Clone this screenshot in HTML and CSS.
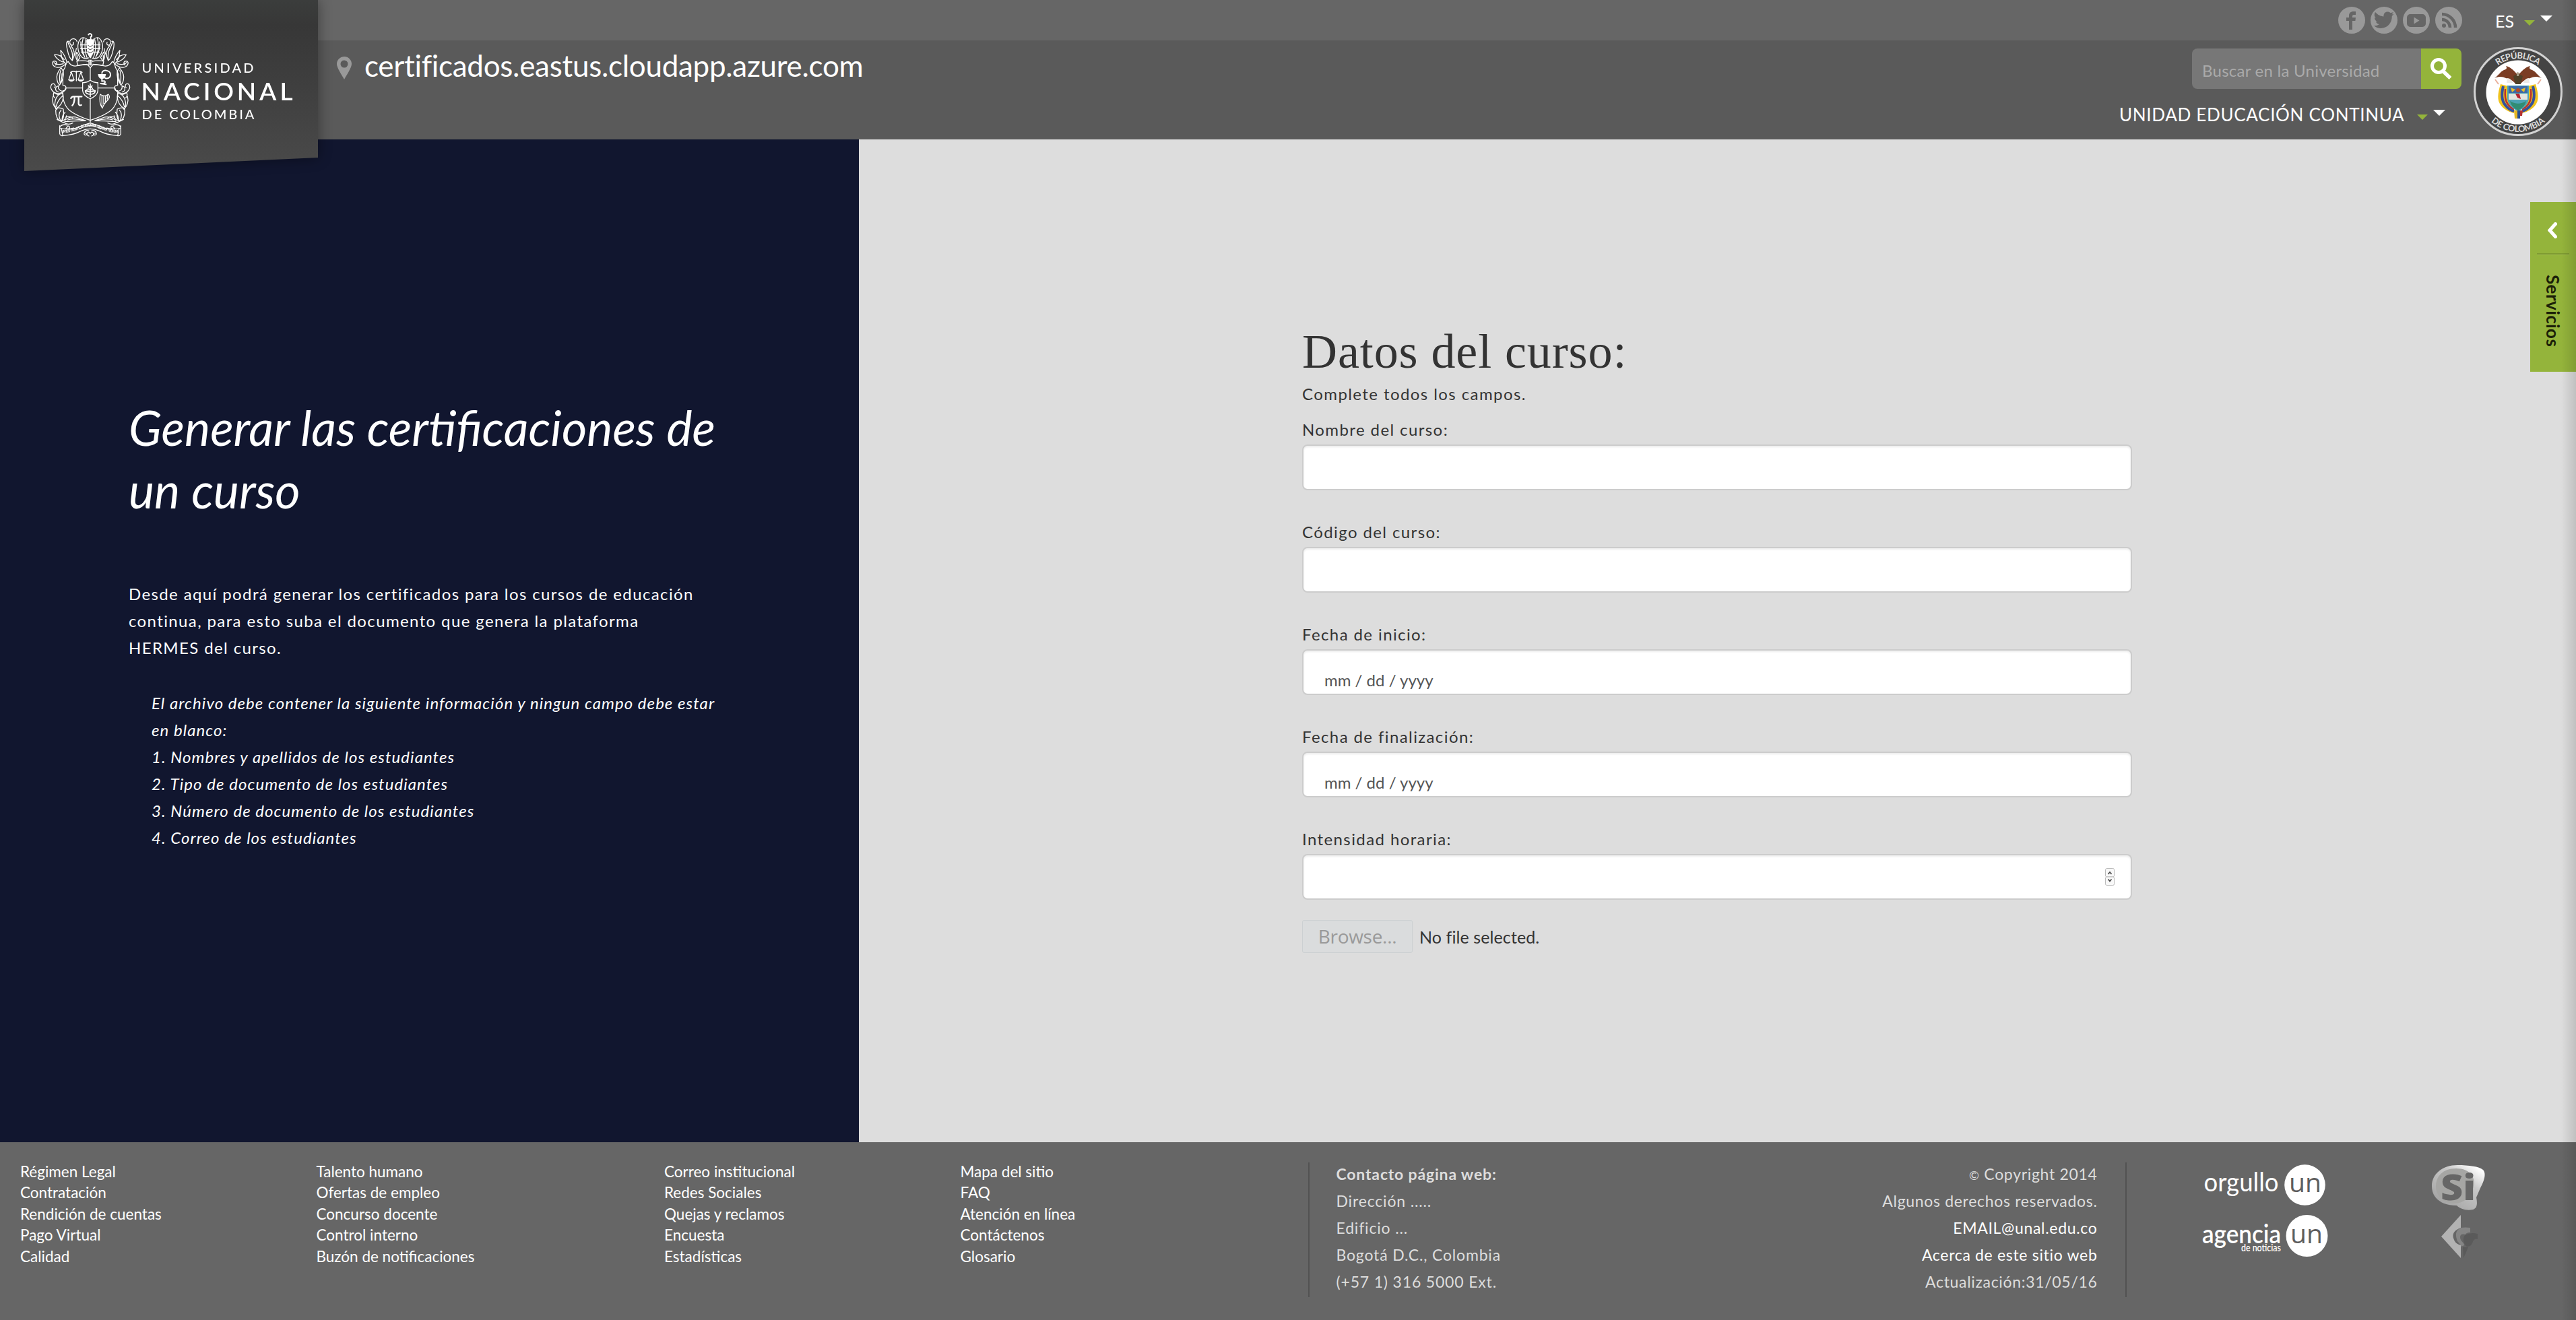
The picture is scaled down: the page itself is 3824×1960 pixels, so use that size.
FILE: index.html
```html
<!DOCTYPE html>
<html lang="es">
<head>
<meta charset="utf-8">
<title>Generar certificaciones</title>
<link rel="stylesheet" href="styles.css">
</head>
<body>
<header class="header">
  <div class="topbar">
    <nav class="social">
      <svg class="social-icon" viewBox="0 0 40 40"><circle cx="20" cy="20" r="20" fill="#999"/><path d="M16 34V21h-4v-5h4v-3c0-4 3-6 7-6h3v5h-2c-2 0-3 .6-3 2v2h5l-.6 5H21v13z" fill="#666"/></svg>
      <svg class="social-icon" viewBox="0 0 40 40"><circle cx="20" cy="20" r="20" fill="#999"/><path d="M5 28c4 .4 6-.5 8-2-3-.5-4.500-2-5-4h2c-3-1.200-4-3.500-4-6l2 .6C5 14 5.500 11 7 8c4 4.500 8 6 12.500 6.400C19 10 22 7.500 25 7.500c2 0 3.500.6 4.800 1.800L34 8l-2.500 3.500 3-.7-2.700 3C32 24 25 32 15 32c-4 0-7-1.500-10-4z" fill="#666"/></svg>
      <svg class="social-icon" viewBox="0 0 40 40"><circle cx="20" cy="20" r="20" fill="#999"/><rect x="6" y="11" width="28" height="19" rx="5" fill="#666"/><path d="M16.500 15.500v10l8-5z" fill="#999"/></svg>
      <svg class="social-icon" viewBox="0 0 40 40"><circle cx="20" cy="20" r="20" fill="#999"/><circle cx="13" cy="28" r="3" fill="#666"/><path d="M10 19a12 12 0 0 1 12 12M10 11a20 20 0 0 1 20 20" fill="none" stroke="#666" stroke-width="4.500"/></svg>
    </nav>
    <div class="lang"><span>ES</span><i class="caret caret-green"></i><i class="caret caret-white"></i></div>
  </div>
  <div class="mainbar">
    <svg class="pin" viewBox="0 0 22 34"><path fill-rule="evenodd" d="M11 0a11 11 0 0 1 11 11c0 6-8 17-11 23C8 28 0 17 0 11A11 11 0 0 1 11 0zm0 5.500a5.500 5.500 0 1 0 0 11 5.500 5.500 0 0 0 0-11z" fill="#999"/></svg>
    <a class="site-name">certificados.eastus.cloudapp.azure.com</a>
    <div class="tools">
      <div class="search">
        <input class="search-input" type="text" placeholder="Buscar en la Universidad">
        <button class="search-btn"><svg viewBox="0 0 32 32" class="search-icon"><circle cx="12" cy="12" r="9.500" fill="none" stroke="#fff" stroke-width="5"/><path d="M19 20l10.500 10" stroke="#fff" stroke-width="5.500"/></svg></button>
      </div>
      <div class="unit"><span>UNIDAD EDUCACIÓN CONTINUA</span><i class="caret caret-green"></i><i class="caret caret-white"></i></div>
    </div>
    <svg class="crest" viewBox="0 0 132 132">
      <defs>
        <path id="arcTop" d="M17 66a49 49 0 0 1 98 0"/>
        <path id="arcBottom" d="M6 66a60 60 0 0 0 120 0"/>
      </defs>
      <circle cx="66" cy="66" r="64.500" fill="#444" stroke="#d2d2d2" stroke-width="3"/>
      <circle cx="66" cy="67" r="47.500" fill="#fff"/>
      <text class="crest-text"><textPath href="#arcTop" startOffset="50%" text-anchor="middle" textLength="64">REPÚBLICA</textPath></text>
      <text class="crest-text"><textPath href="#arcBottom" startOffset="50%" text-anchor="middle" textLength="88">DE COLOMBIA</textPath></text>
      <path d="M40 55c-4 13-6 24 1 32 6 7 14 10 19 11V60zM92 55c4 13 6 24-1 32-6 7-14 10-19 11V60z" fill="#f0c31c"/>
      <path d="M44 58c-3 12-2 22 3 28 4 5 9 8 13 9M88 58c3 12 2 22-3 28-4 5-9 8-13 9" fill="none" stroke="#35519b" stroke-width="4"/>
      <path d="M47 62c-1 10 0 18 4 23 3 4 6 6 9 7M85 62c1 10 0 18-4 23-3 4-6 6-9 7" fill="none" stroke="#b83332" stroke-width="2.500"/>
      <path d="M50 57h32v18c0 10-8 16-16 21-8-5-16-11-16-21z" fill="#4da3b5"/>
      <path d="M52 58h28v10H52z" fill="#3b6aa8"/><path d="M52 69h28v9H52z" fill="#e2e5df"/>
      <path d="M55 60l7 3-5 4zM77 60l-7 3 5 4z" fill="#e8be2c"/><circle cx="66" cy="64" r="3" fill="#b64b26"/>
      <path d="M62 69h6l2 8-5-2z" fill="#b52330"/><path d="M54 80c8 5 16 5 24 0-2 8-7 11-12 14-5-3-10-6-12-14z" fill="#318c73"/>
      <path d="M66 42c-8-10-13-13-18-14 2 3 1 5-3 6-5 2-7 7-14 12 8-3 12-2 17 0 5 1 9 3 13 7h10c4-4 8-6 13-7 5-2 9-3 17 0-7-5-9-10-14-12-4-1-5-3-3-6-5 1-10 4-18 14z" fill="#7b3d24"/>
      <path d="M59 43l7-4 7 4-3 12h-8z" fill="#4f4128"/><path d="M64 37l4 1-1 5h-3z" fill="#a89e88"/>
      <path d="M50 46c4 0 7 3 8 7h-9zM82 46c-4 0-7 3-8 7h9z" fill="#eceae6"/>
      <path d="M32 48l5 7M100 48l-5 7" stroke="#eab09a" stroke-width="2"/>
      <path d="M60 94h5v12h-4z" fill="#e5b721"/><path d="M65 94h4v12h-4z" fill="#294e92"/><path d="M69 94h4l-1 8h-3z" fill="#b43232"/>
    </svg>
  </div>
  <svg class="brand" viewBox="0 0 436 254">
    <defs>
      <linearGradient id="brandFill" x1="0" y1="0" x2="0" y2="1"><stop offset="0" stop-color="#3b3d3c"/><stop offset=".15" stop-color="#373737"/><stop offset="1" stop-color="#4a4a4a"/></linearGradient>
      <path id="motto" d="M74 471q42 2 80-16 50-24 100 0 38 18 80 16"/>
      <g id="coatHalf">
        <path d="M204 182l-14-16-50 8q-22 2-34-20l-10 8q-3 20-10 28-6 9-4 26v44q14 0 14 12t-14 12q-4 58 30 88 30 24 92 44"/>
        <path d="M196 62c-8-12-26-20-34-10-20 20-16 60 4 82 8 6 22 10 30 4"/>
        <path d="M172 50q-12 45 8 86M184 56q-10 40 6 82M162 66q-2 40 14 62M160 80h38M160 96h38M164 112h34"/>
        <path d="M145 66c-2-20-36-16-32 6 6 16 22 8 16-4M108 64c-16-4-8 30-6 38 4 20 10 40 22 48 8-26 16-34 18-54M104 66c8 30 26 40 20 80M118 84c18 20 18 40 8 60M144 112q-10 24 4 40l10-16zM146 128v22"/>
        <path d="M144 152q30-4 54 2v16q-26-6-50 2zM196 148h8v22"/>
        <path d="M96 166q-20-14-24-62 20 22 28 54M90 158q-32-6-46-34 24-4 44 22M84 164q-30 8-42-6M96 164q-24 20-42 16c-18-4-26-26-10-28 14 0 12 16 4 18M72 128l16 30"/>
        <path d="M74 182q-24 28-18 54 4 18 12 22 20-28 16-60zM72 194q-8 28-2 58M78 208q0 26-8 44"/>
        <path d="M94 272q-2 20-30 24c-24 4-44-24-32-40 12-10 22 8 12 14M62 262q-2 20 16 24M66 262c-22 2-20 24-4 28"/>
        <path d="M82 296q-34 4-36 50l4 18q30-14 34-52zM46 316q-10-8-4-24 10 8 20 10M52 356q6-30 30-50M38 310c-6 22 2 46 18 56"/>
        <path d="M84 366q-28-14-34 6c0 24 6 40 22 48q18-8 12-52zM72 418c-10-20-10-34 2-48M92 380q-14 12-14 38 16-2 20-22M56 412l28 14"/>
        <path d="M90 416q24-20 50-14 26 8 44 16-40 0-94 4M104 414q30-10 76 4M84 424q20 16 42 4M96 402q20-6 30 4"/>
        <path d="M204 428q-36 10-66 24-32 8-42 0 12-18 16-6 0 10-10 8M68 444q16-14 34-6M68 440v36q4 12 16 8 50-4 78-20 22-10 42-10M68 450q28 10 62 0M82 484l-6-28M204 440q-20 0-48 14"/>
        <path d="M204 474c-10-16-24 8-6 12M198 462c-18-6-30 20-14 20 8-2 4-12-2-8"/>
      </g>
    </defs>
    <path d="M0 0H436V234L0 254z" fill="url(#brandFill)"/>
    <g transform="translate(30 40) scale(.3333)" fill="none" stroke="#fff" stroke-width="3.800" stroke-linecap="round" stroke-linejoin="round">
      <use href="#coatHalf"/>
      <use href="#coatHalf" transform="translate(408 0) scale(-1 1)"/>
      <path d="M204 184v240M96 272h216"/>
      <path d="M196 34q6-8 14 0 2 10-4 10v8" stroke-width="6"/>
      <path d="M188 60q16-8 32 0l-4 56-12 22-12-22z" fill="#fff"/>
      <path d="M194 82l10 6 10-6M194 96l10 6 10-6M194 110l10 6 10-6" stroke="#444" stroke-width="3"/>
      <path d="M170 248q16 2 34-10 18 12 34 10v36q-2 22-34 36-32-14-34-36z" fill="#404040"/>
      <path d="M204 254v56M204 266l-10 8M204 266l10 8M204 280l-16 0M204 280l16 0M204 290l-22-6M204 290l22-6M204 300q-18 0-22-12M204 300q18 0 22-12M196 262l8 12 8-12" stroke-width="5"/>
      <path d="M116 202q14-8 26 0 12-8 26 0M142 196v44M120 202l-12 34M120 202l12 34M162 202l-12 34M162 202l12 34"/>
      <path d="M108 236h24q-12 12-24 0zM150 236h24q-12 12-24 0z" fill="#fff"/>
      <path d="M240 212h32q-4 18-16 18t-16-18z" fill="#fff"/><path d="M256 228v14q14-4 14 4t-20 6l24 4M256 206c0-18 38-16 38 6 0 18-18 20-26 14" stroke-width="6"/>
      <path d="M118 318q2-8 12-8h36M134 312q0 28-10 38M152 312v30q2 10 12 6" stroke-width="7"/>
      <path d="M248 300q-6 40 10 62 6-20 26-38 10-14 0-24-18 14-36 0zM256 306v46M264 308v34M272 308v24M280 304v18"/>
      <text class="motto-text"><textPath href="#motto" startOffset="50%" text-anchor="middle" textLength="256">INTER · AULAS · ACADEMIÆ · QUÆRE · VERUM</textPath></text>
    </g>
    <g class="brand-text" fill="#fff">
      <text x="174.500" y="107.700" font-size="20" textLength="166">UNIVERSIDAD</text>
      <text x="173.500" y="148.500" font-size="37" class="brand-strong" textLength="225">NACIONAL</text>
      <text x="174.500" y="177" font-size="20" textLength="167">DE COLOMBIA</text>
    </g>
  </svg>
</header>

<main class="main">
  <section class="intro">
    <h1 class="intro-title">Generar las certificaciones de<br>un curso</h1>
    <p class="intro-text">Desde aquí podrá generar los certificados para los cursos de educación<br>continua, para esto suba el documento que genera la plataforma<br>HERMES del curso.</p>
    <div class="intro-list">El archivo debe contener la siguiente información y ningun campo debe estar<br>en blanco:<br>1. Nombres y apellidos de los estudiantes<br>2. Tipo de documento de los estudiantes<br>3. Número de documento de los estudiantes<br>4. Correo de los estudiantes</div>
  </section>
  <form class="form">
    <h2 class="form-title">Datos del curso:</h2>
    <p class="form-hint">Complete todos los campos.</p>
    <label class="field"><span>Nombre del curso:</span><input class="input" type="text"></label>
    <label class="field"><span>Código del curso:</span><input class="input" type="text"></label>
    <label class="field"><span>Fecha de inicio:</span><input class="input input-date" type="text" placeholder="mm / dd / yyyy"></label>
    <label class="field"><span>Fecha de finalización:</span><input class="input input-date" type="text" placeholder="mm / dd / yyyy"></label>
    <div class="field"><span>Intensidad horaria:</span>
      <div class="input input-number">
        <svg class="spinner" viewBox="0 0 14 26"><rect x=".5" y=".5" width="13" height="12.500" rx="2" fill="#f8f8f8" stroke="#bbb"/><rect x=".5" y="13" width="13" height="12.500" rx="2" fill="#f8f8f8" stroke="#bbb"/><path d="M4.500 9L7 6l2.500 3M4.500 16.500L7 19.500l2.500-3" fill="none" stroke="#444" stroke-width="1.600"/></svg>
      </div>
    </div>
    <div class="file"><button class="browse" type="button">Browse...</button><span>No file selected.</span></div>
  </form>
</main>

<footer class="footer">
  <ul class="links"><li>Régimen Legal</li><li>Contratación</li><li>Rendición de cuentas</li><li>Pago Virtual</li><li>Calidad</li></ul>
  <ul class="links"><li>Talento humano</li><li>Ofertas de empleo</li><li>Concurso docente</li><li>Control interno</li><li>Buzón de notificaciones</li></ul>
  <ul class="links"><li>Correo institucional</li><li>Redes Sociales</li><li>Quejas y reclamos</li><li>Encuesta</li><li>Estadísticas</li></ul>
  <ul class="links"><li>Mapa del sitio</li><li>FAQ</li><li>Atención en línea</li><li>Contáctenos</li><li>Glosario</li></ul>
  <div class="contact">
    <p class="contact-left"><b>Contacto página web:</b><br>Dirección .....<br>Edificio ...<br>Bogotá D.C., Colombia<br>(+57 1) 316 5000 Ext.</p>
    <p class="contact-right"><span class="copy">©</span> Copyright 2014<br>Algunos derechos reservados.<br><a>EMAIL@unal.edu.co</a><br><a>Acerca de este sitio web</a><br>Actualización:31/05/16</p>
  </div>
  <div class="partners">
    <svg class="partner-un" viewBox="0 0 190 140">
      <circle cx="152.500" cy="33.500" r="30.300" fill="#fff"/><circle cx="155.500" cy="109" r="31" fill="#fff"/>
      <g class="partner-text" fill="#fff">
        <text x="2.500" y="43" font-size="39" textLength="111" lengthAdjust="spacingAndGlyphs">orgullo</text>
        <text x="0" y="120" font-size="39" font-weight="600" textLength="117" lengthAdjust="spacingAndGlyphs">agencia</text>
        <text x="58" y="131.700" font-size="14.500" font-weight="600" textLength="59" lengthAdjust="spacingAndGlyphs">de noticias</text>
      </g>
      <g class="partner-un-text" fill="#5e5e5e"><text x="129" y="44" font-size="39" textLength="48" lengthAdjust="spacingAndGlyphs">un</text><text x="131" y="120" font-size="39" textLength="48" lengthAdjust="spacingAndGlyphs">un</text></g>
    </svg>
    <svg class="partner-si" viewBox="0 0 80 140">
      <defs><linearGradient id="siFill" x1="0" y1="1" x2=".8" y2="0"><stop offset="0" stop-color="#999"/><stop offset=".7" stop-color="#c8c8c8"/><stop offset="1" stop-color="#fff"/></linearGradient></defs>
      <path d="M38 0c17 0 32 2 38 7 5 5 2 16-4 27l-6 14c2 10 1 16-5 18-10 2-19-1-24-6C14 60 0 49 0 31S16 0 38 0z" fill="url(#siFill)"/>
      <path d="M36 5C16 5 6 17 6 32c0 13 11 25 27 25 9 0 18-4 23-12 6-9 9-20 4-29C55 8 46 5 36 5z" fill="#a6a6a4"/>
      <text class="si-text" x="13" y="52" font-size="53" textLength="52" lengthAdjust="spacingAndGlyphs">Si</text>
      <path d="M43 74v19c-10 4-14 9-10 18 2 5 6 7 10 8v19L14 106z" fill="#b3b3b3"/>
      <path d="M43 93q7-1 14 0v7q-6 0-7 3-8-2-8 4c0 6 6 8 6 12l-4 2q-3-5-6-8-6-15 5-20z" fill="#858585"/>
      <path d="M49 104q9-5 19-2v8q-4-2-7 3c-1 4-3 8-9 8-5-3-7-12-3-17zM46 122h8l-7 16z" fill="#5a5a5a"/>
    </svg>
  </div>
</footer>

<aside class="services">
  <svg class="services-arrow" viewBox="0 0 14 24"><path d="M11.500 2.500L3 12l8.500 9.500" fill="none" stroke="#fff" stroke-width="5" stroke-linecap="round"/></svg>
  <hr class="services-line">
  <span class="services-label">Servicios</span>
</aside>
<div class="edge-shadow"></div>
</body>
</html>
```
FILE: styles.css
```css
* { box-sizing: border-box; }
html, body { margin: 0; }
body {
  position: relative;
  width: 3824px;
  height: 1960px;
  overflow: hidden;
  display: flex;
  flex-direction: column;
  font-family: Lato, "Open Sans", sans-serif;
  font-size: 24px;
  color: #333;
  background: #ddd;
}
p, h1, h2, ul { margin: 0; padding: 0; font-weight: 400; }
ul { list-style: none; }
input, button { font: inherit; border: 0; padding: 0; }

/* header */
.header { position: relative; z-index: 2; flex: none; color: #fff; }
.topbar {
  display: flex;
  justify-content: flex-end;
  height: 60px;
  background: #666;
}
.social { display: flex; gap: 8px; padding-top: 10px; }
.social-icon { width: 40px; height: 40px; }
.lang {
  display: flex;
  width: 169px;
  padding-left: 49px;
  font-size: 25px;
  line-height: 62px;
}
.lang span { width: 43px; }
.caret { width: 0; height: 0; border-style: solid; border-color: transparent; flex: none; }
.caret-green { border-width: 8px 8px 0; border-top-color: #94b43b; margin-top: 30px; }
.caret-white { border-width: 9px 9px 0; border-top-color: #fff; margin: 23px 0 0 8px; }
.mainbar {
  display: flex;
  align-items: flex-start;
  height: 147px;
  padding: 10px 20px 0 500px;
  background: #5a5a5a;
}
.pin { width: 22px; height: 34px; margin: 14px 19px 0 0; }
.site-name { font-size: 44px; line-height: 60px; letter-spacing: -.300px; margin-top: -3px; }
.tools { display: flex; flex-direction: column; align-items: flex-end; margin-left: auto; width: 520px; }
.search { display: flex; width: 400px; height: 60px; margin-top: 2px; border-radius: 8px; overflow: hidden; }
.search-input { flex: 1; min-width: 0; padding: 4px 0 0 15px; background: #777; letter-spacing: .250px; }
.search-input::placeholder { color: #aaa; }
.search-btn { display: flex; width: 60px; background: #94b43b; }
.search-icon { width: 32px; height: 32px; margin: 14px 0 0 14px; }
.unit { display: flex; margin-top: 14px; margin-right: 24px; font-size: 26px; line-height: 49px; letter-spacing: .680px; }
.unit span { width: 442px; }
.unit .caret-green { margin-top: 24px; }
.unit .caret-white { margin-top: 17px; }
.crest { width: 132px; height: 132px; margin-left: 18px; }
.crest-text { font-size: 13px; font-weight: 700; fill: #ddd; }
.brand {
  position: absolute;
  left: 36px;
  top: 0;
  width: 436px;
  height: 254px;
  filter: drop-shadow(0 0 10px rgba(0, 0, 0, .4));
}
.brand-text { font-weight: 500; }
.brand-strong { font-weight: 600; }
.motto-text { font-family: "Open Sans", sans-serif; font-size: 17px; font-weight: 700; font-stretch: 75%; fill: #fff; stroke: none; }

/* content */
.main { display: flex; flex: none; height: 1489px; }
.intro { width: 1275px; padding: 381px 0 0 191px; background: #11162f; color: #fff; white-space: nowrap; }
.intro-title { font-size: 72px; line-height: 93px; font-style: italic; }
.intro-text { margin-top: 88px; line-height: 40px; letter-spacing: 1.380px; }
.intro-list { margin: 42px 0 0 34px; line-height: 40px; letter-spacing: 1.050px; font-style: italic; }
.form { flex: 1; padding: 275px 0 0 658px; background: #ddd; }
.form-title { font: 72px/80px "Liberation Serif", serif; letter-spacing: .9px; }
.form-hint { margin: 7px 0 21px; line-height: 32px; letter-spacing: 1.420px; }
.field { display: flex; flex-direction: column; gap: 6px; width: 1232px; margin-bottom: 46px; line-height: 32px; letter-spacing: 1.400px; }
.input {
  height: 68px;
  width: 100%;
  border: 2px solid #ccc;
  border-radius: 8px;
  background: #fff;
  box-shadow: inset 0 2px 3px rgba(0, 0, 0, .08);
}
.input-date { padding: 22px 0 0 31px; font-size: 24px; letter-spacing: 0; }
.input-date::placeholder { color: #555; }
.input-number { display: flex; justify-content: flex-end; align-items: center; padding-right: 24px; }
.spinner { width: 14px; height: 26px; }
.file { display: flex; align-items: center; gap: 10px; margin-top: -16px; }
.file span { font-size: 25px; letter-spacing: .1px; }
.browse { width: 164px; height: 49px; border: 1px solid #ccd0d2; border-radius: 3px; background: #dadcdd; color: #999; font-family: "Open Sans", sans-serif; font-size: 28px; line-height: 45px; letter-spacing: -.300px; }

/* footer */
.footer {
  display: grid;
  grid-template-columns: 439.500px 516.500px 439.500px 516px 1215px 1fr;
  height: 264px;
  padding-left: 30px;
  background: #666;
  color: #fff;
}
.links { padding-top: 28px; font-size: 22.500px; line-height: 31.400px; }
.contact {
  display: flex;
  justify-content: space-between;
  height: 200px;
  margin-top: 30px;
  padding: 0 41px 0 40px;
  border: solid #525252;
  border-width: 0 2px;
  color: #ddd;
  font-size: 23px;
  line-height: 40px;
}
.contact p { margin-top: -3px; }
.contact a { color: #fff; }
.contact-left { letter-spacing: .830px; }
.contact-right { text-align: right; letter-spacing: .680px; }
.copy { font-size: 18px; line-height: 1; }
.partners { display: flex; padding-top: 30px; }
.partner-un { width: 190px; height: 140px; margin-left: 112px; }
.partner-si { width: 80px; height: 140px; margin: 4px 0 0 151px; overflow: visible; }
.partner-un-text { font-family: "Open Sans", sans-serif; font-weight: 500; }
.si-text { font-family: "Open Sans", sans-serif; font-weight: 800; fill: #666; }

/* services tab and the hidden panel's shadow */
.services {
  position: absolute;
  z-index: 3;
  right: 0;
  top: 300px;
  display: flex;
  flex-direction: column;
  align-items: center;
  width: 68px;
  height: 252px;
  padding-top: 30px;
  background: #94b43b;
}
.services-arrow { width: 14px; height: 24px; margin-right: 2px; }
.services-line { width: 48px; height: 3px; margin: 22px 0 0; border: 0; border-top: 2px solid #7d9a30; border-bottom: 1px solid #a8c455; }
.services-label { margin-top: 29px; writing-mode: vertical-rl; color: #1b2008; font-weight: 700; font-size: 26px; line-height: 40px; letter-spacing: .400px; }
.edge-shadow {
  position: absolute;
  z-index: 4;
  right: 0;
  top: 0;
  width: 22px;
  height: 1960px;
  background: linear-gradient(to right, transparent, rgba(0, 0, 0, .13));
}
```
